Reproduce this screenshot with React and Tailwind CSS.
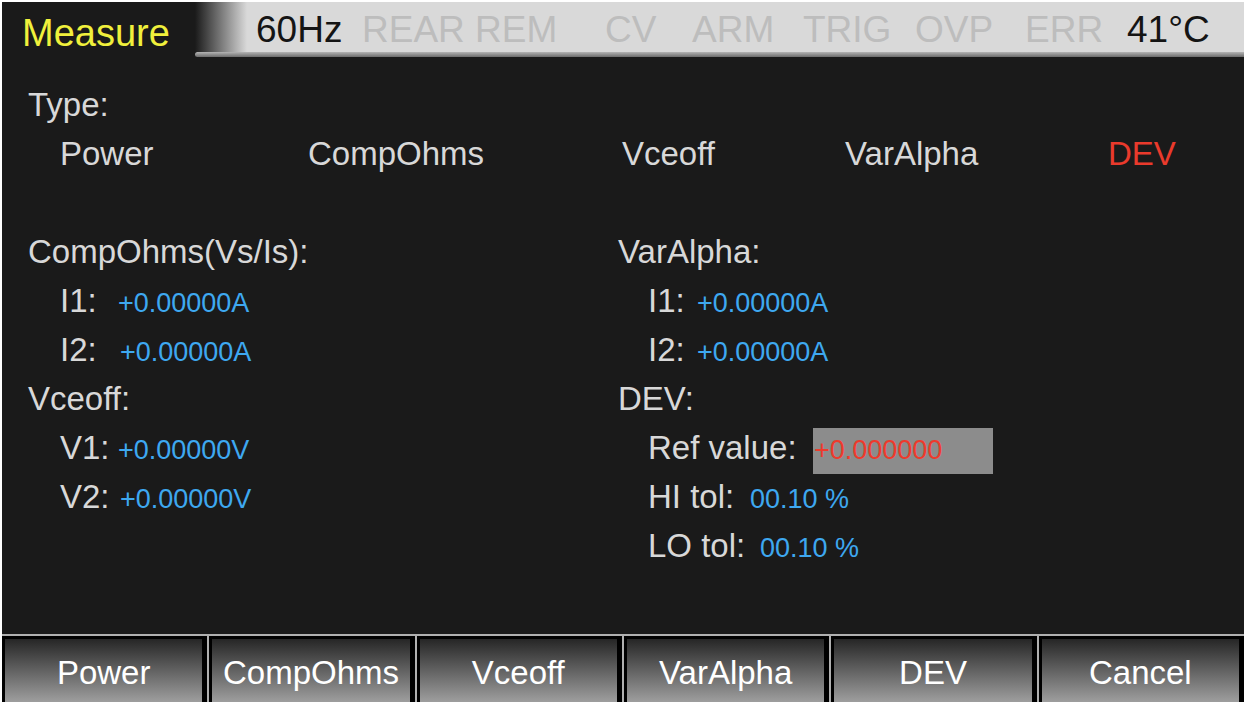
const status = [
  { t: '60Hz', w: 'w-[106px]', c: 'text-[#141414]' },
  { t: 'REAR REM', w: 'w-[243px]', c: 'text-[#bdbdbd]' },
  { t: 'CV', w: 'w-[87px]', c: 'text-[#bdbdbd]' },
  { t: 'ARM', w: 'w-[111px]', c: 'text-[#bdbdbd]' },
  { t: 'TRIG', w: 'w-[112px]', c: 'text-[#bdbdbd]' },
  { t: 'OVP', w: 'w-[110px]', c: 'text-[#bdbdbd]' },
  { t: 'ERR', w: 'w-[102px]', c: 'text-[#bdbdbd]' },
  { t: '41°C', w: 'w-auto', c: 'text-[#141414]' },
]

const types = [
  { t: 'Power', w: 'w-[248px]', c: 'text-[#d8d8d8]' },
  { t: 'CompOhms', w: 'w-[314px]', c: 'text-[#d8d8d8]' },
  { t: 'Vceoff', w: 'w-[223px]', c: 'text-[#d8d8d8]' },
  { t: 'VarAlpha', w: 'w-[263px]', c: 'text-[#d8d8d8]' },
  { t: 'DEV', w: 'w-auto', c: 'text-[#ea3a2c]' },
]

const keys = ['Power', 'CompOhms', 'Vceoff', 'VarAlpha', 'DEV', 'Cancel']

function Heading({ children }) {
  return <div className="h-[49px] leading-[49px] text-[#d8d8d8]">{children}</div>
}

function Field({ label, w, value, indent }) {
  return (
    <div className={`flex h-[49px] items-baseline ${indent}`}>
      <span className={`shrink-0 leading-[49px] text-[#d8d8d8] ${w}`}>{label}</span>
      <span className="leading-[49px] text-[27px] text-[#3ea8f0]">{value}</span>
    </div>
  )
}

export default function App() {
  return (
    <div className="h-[702px] w-[1244px] overflow-hidden bg-white pl-[2px] pt-[2px]" style={{ fontFamily: '"Liberation Sans", Arial, sans-serif' }}>
      <div className="flex h-full flex-col bg-[#1a1a1a]">
        {/* header */}
        <div className="flex h-[55px] shrink-0">
          <div className="w-[193px] shrink-0 pl-[20px] pt-[12px] text-[38px] leading-none text-[#f0f03c]">Measure</div>
          <div className="flex flex-1 flex-col">
            <div className="flex h-[50px] items-center bg-[linear-gradient(to_right,#1a1a1a,#d9d9d9_52px)] pl-[61px] pt-[5px] text-[37px] leading-none">
              {status.map((s) => (
                <span key={s.t} className={`shrink-0 whitespace-nowrap ${s.w} ${s.c}`}>{s.t}</span>
              ))}
            </div>
            <div className="h-[5px] rounded-l-full bg-[linear-gradient(to_bottom,#b4b4b4,#6c6c6c)]" />
          </div>
        </div>

        {/* body */}
        <div className="flex-1 pl-[26px] pt-[23px] text-[33px]">
          <Heading>Type:</Heading>
          <div className="flex h-[49px] items-center pl-[32px] leading-[49px]">
            {types.map((t) => (
              <span key={t.t} className={`shrink-0 ${t.w} ${t.c}`}>{t.t}</span>
            ))}
          </div>
          <div className="h-[49px]" />
          <div className="flex">
            <div className="w-[590px] shrink-0">
              <Heading>CompOhms(Vs/Is):</Heading>
              <Field indent="pl-[32px]" label="I1:" w="w-[58px]" value="+0.00000A" />
              <Field indent="pl-[32px]" label="I2:" w="w-[60px]" value="+0.00000A" />
              <Heading>Vceoff:</Heading>
              <Field indent="pl-[32px]" label="V1:" w="w-[58px]" value="+0.00000V" />
              <Field indent="pl-[32px]" label="V2:" w="w-[60px]" value="+0.00000V" />
            </div>
            <div className="flex-1">
              <Heading>VarAlpha:</Heading>
              <Field indent="pl-[30px]" label="I1:" w="w-[49px]" value="+0.00000A" />
              <Field indent="pl-[30px]" label="I2:" w="w-[49px]" value="+0.00000A" />
              <Heading>DEV:</Heading>
              <div className="flex h-[49px] items-center pl-[30px]">
                <span className="w-[165px] shrink-0 leading-[49px] text-[#d8d8d8]">Ref value:</span>
                <div className="mt-[6px] flex h-[46px] w-[180px] items-center bg-[#8c8c8c] pl-[1px] text-[27px] leading-none text-[#ee3a2c]">+0.000000</div>
              </div>
              <Field indent="pl-[30px]" label="HI tol:" w="w-[102px]" value="00.10 %" />
              <Field indent="pl-[30px]" label="LO tol:" w="w-[112px]" value="00.10 %" />
            </div>
          </div>
        </div>

        {/* soft keys */}
        <div className="grid h-[68px] shrink-0 grid-cols-6 gap-[2px] bg-[#b0b0b0] pt-[2px]">
          {keys.map((k) => (
            <div key={k} className="bg-black pl-[3px] pr-[5px] pt-[3px]">
              <div className="flex h-full items-center justify-center bg-[linear-gradient(to_bottom,#262626,#9e9e9e)] pt-[3px] text-[33px] leading-none text-white">
                {k}
              </div>
            </div>
          ))}
        </div>
      </div>
    </div>
  )
}
